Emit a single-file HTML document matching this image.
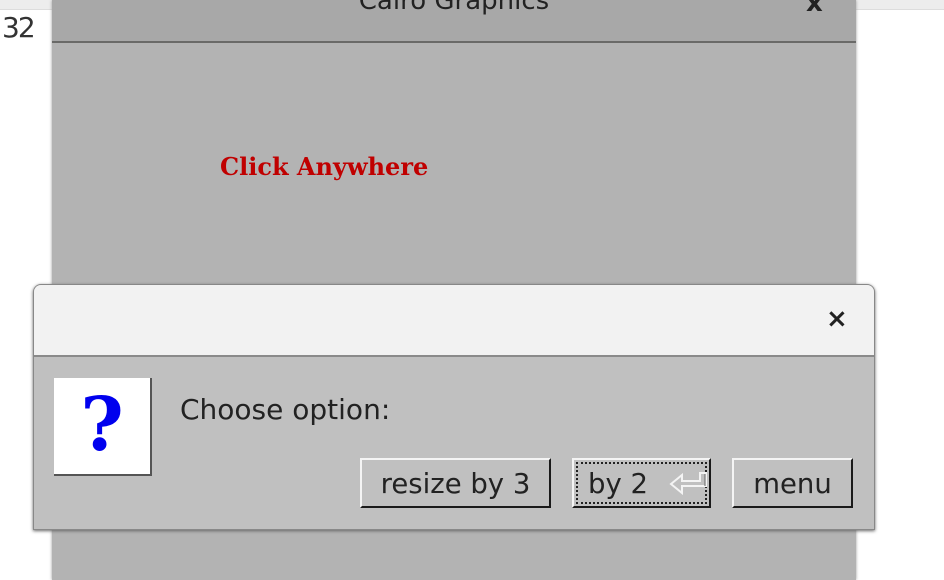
<!DOCTYPE html><html><head><style>
body{margin:0;width:944px;height:580px;background:#fff;position:relative;overflow:hidden;font-family:"DejaVu Sans","Liberation Sans",sans-serif}
.a{position:absolute}
.btn{position:absolute;top:458px;height:50px;box-sizing:border-box;background:#c0c0c0;border:2px solid;border-color:#f4f4f4 #1a1a1a #1a1a1a #f4f4f4;font-size:27.5px;color:#222;text-align:center;line-height:48px}
</style></head><body>
<div class="a" style="left:0;top:0;width:944px;height:9px;background:#ededed;border-bottom:1px solid #ddd"></div>
<div class="a" style="left:2px;top:11px;font-size:28px;color:#333;letter-spacing:-2px">32</div>
<div class="a" style="left:52px;top:0;width:804px;height:580px;background:#b3b3b3;box-shadow:0 0 3px #999"></div>
<div class="a" style="left:52px;top:0;width:804px;height:41px;background:#a8a8a8;border-bottom:2px solid #6a6a68"></div>
<div class="a" style="left:52px;top:-14px;width:804px;text-align:center;font-size:26px;color:#222">Cairo Graphics</div>
<div class="a" style="left:806px;top:-12px;font-size:26px;color:#222;font-weight:bold">x</div>
<div class="a" style="left:220px;top:152px;font-family:'DejaVu Serif','Liberation Serif',serif;font-weight:bold;font-size:24px;color:#c00000">Click Anywhere</div>
<div class="a" style="left:33px;top:284px;width:842px;height:246px;background:#c0c0c0;border:1px solid #888;box-sizing:border-box;border-radius:8px 8px 0 0;box-shadow:0 1px 3px #666;overflow:hidden">
<div class="a" style="left:0;top:0;width:842px;height:70px;background:#f2f2f2;border-bottom:2px solid #8a8a8a"></div>
</div>
<div class="a" style="left:826px;top:304px;font-size:26px;font-weight:bold;color:#222">×</div>
<div class="a" style="left:54px;top:378px;width:98px;height:98px;background:#fff;border-right:2px solid #555;border-bottom:2px solid #555;box-sizing:border-box;text-align:center;font-family:'DejaVu Serif',serif;font-weight:bold;font-size:74px;color:#0000ee;line-height:94px">?</div>
<div class="a" style="left:180px;top:393px;font-size:28px;color:#222">Choose option:</div>
<div class="btn" style="left:360px;width:191px">resize by 3</div>
<div class="btn" style="left:572px;width:139px;text-align:left;padding-left:14px"><div class="a" style="left:2px;top:2px;right:2px;bottom:2px;border:2px dotted #222"></div>by 2
<svg class="a" style="left:94px;top:12px" width="40" height="24"><path d="M38 1V14H14V21L3 12L14 3V9H32V1Z" fill="none" stroke="#f4f4f4" stroke-width="2"/><path d="M37 2V14" stroke="#666" stroke-width="1"/></svg></div>
<div class="btn" style="left:732px;width:121px">menu</div>
</body></html>
